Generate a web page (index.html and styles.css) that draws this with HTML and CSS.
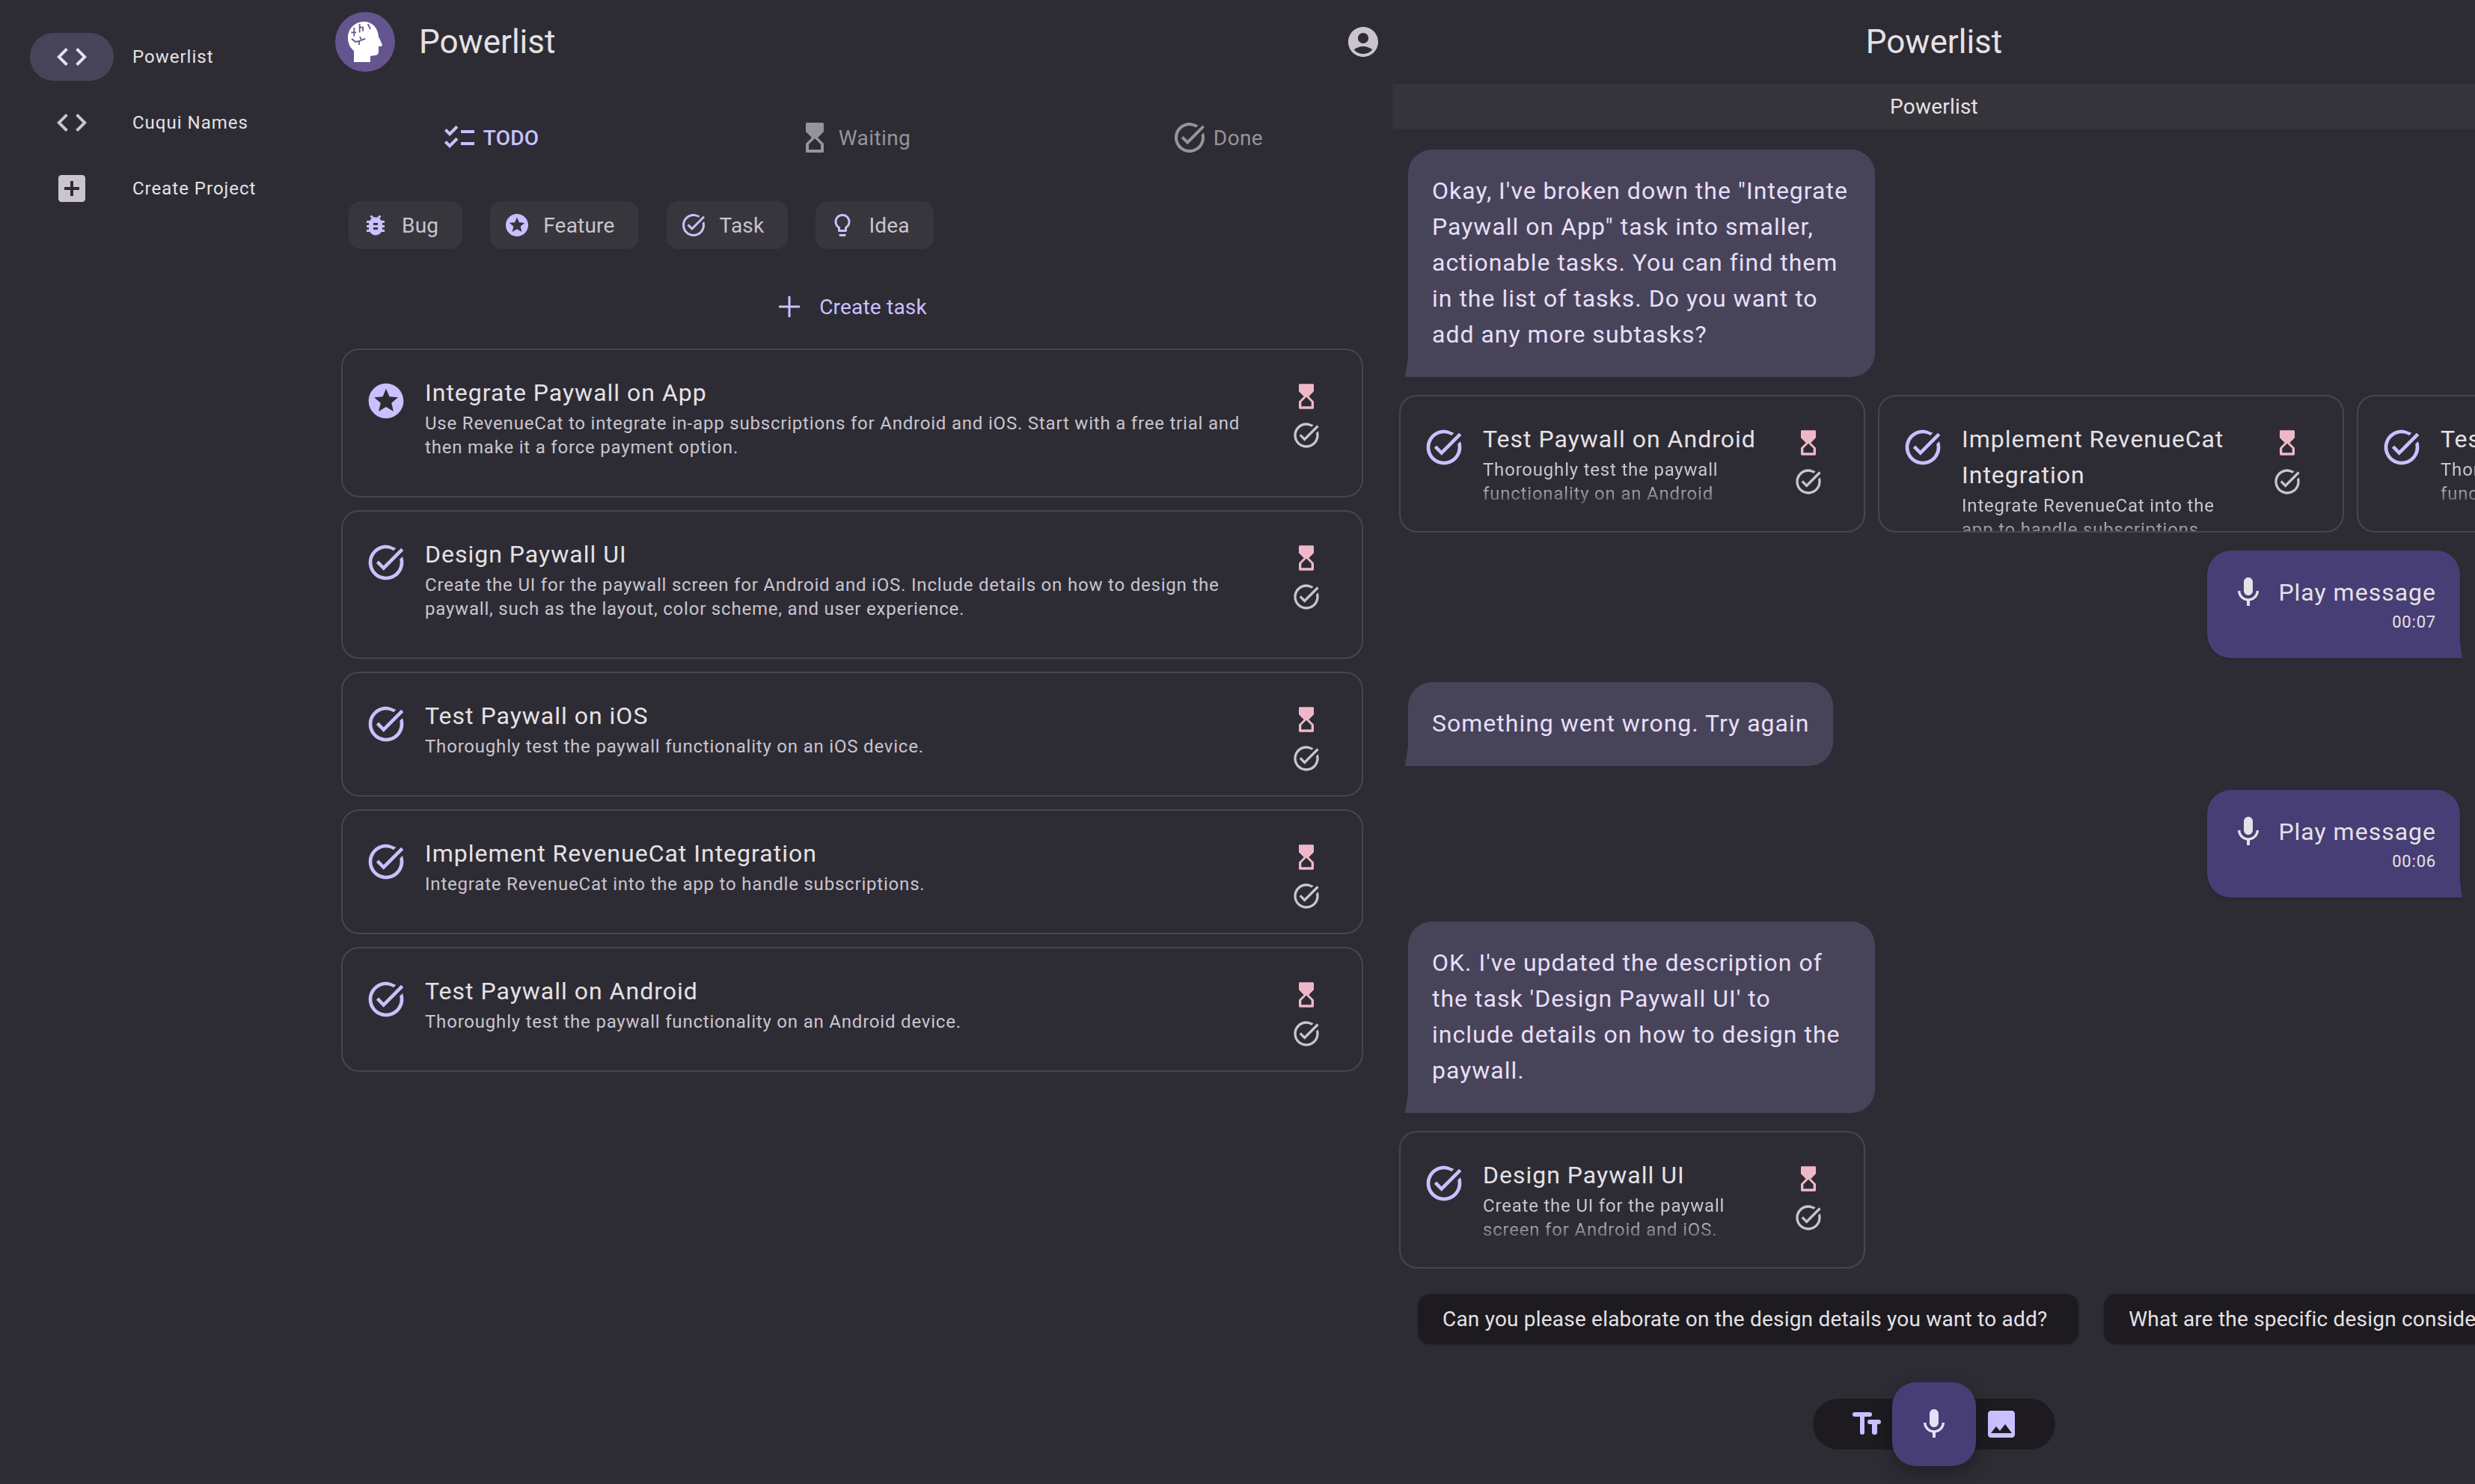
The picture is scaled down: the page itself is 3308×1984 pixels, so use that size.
FILE: index.html
```html
<!DOCTYPE html>
<html lang="en">
<head>
<meta charset="utf-8">
<title>Powerlist</title>
<link rel="stylesheet" href="styles.css">
</head>
<body>
<svg class="sprite" aria-hidden="true">
  <symbol id="i-code" viewBox="0 0 24 24"><path d="M9.4 16.6L4.8 12l4.6-4.6L8 6l-6 6 6 6 1.4-1.4zm5.2 0l4.6-4.6-4.6-4.6L16 6l6 6-6 6-1.4-1.4z"/></symbol>
  <symbol id="i-addbox" viewBox="0 0 24 24"><path d="M19 3H5c-1.11 0-2 .9-2 2v14c0 1.1.89 2 2 2h14c1.1 0 2-.9 2-2V5c0-1.1-.9-2-2-2zm-2 10h-4v4h-2v-4H7v-2h4V7h2v4h4v2z"/></symbol>
  <symbol id="i-account" viewBox="0 0 24 24"><path d="M12 2C6.48 2 2 6.48 2 12s4.48 10 10 10 10-4.48 10-10S17.52 2 12 2zm0 4c1.93 0 3.5 1.57 3.5 3.5S13.93 13 12 13s-3.5-1.57-3.5-3.5S10.07 6 12 6zm0 14c-2.03 0-4.43-.82-6.14-2.88C7.55 15.8 9.68 15 12 15s4.45.8 6.14 2.12C16.43 19.18 14.03 20 12 20z"/></symbol>
  <symbol id="i-checklist" viewBox="0 0 24 24"><path d="M22 7h-9v2h9V7zm0 8h-9v2h9v-2zM5.54 11 2 7.46l1.41-1.41 2.12 2.12 4.24-4.24 1.41 1.41L5.54 11zm0 8L2 15.46l1.41-1.41 2.12 2.12 4.24-4.24 1.41 1.41L5.54 19z"/></symbol>
  <symbol id="i-hourglass" viewBox="0 0 24 24"><path d="M6.8 2h10.4c.44 0 .8.36.8.8V8l-4 4 4 4v5.2c0 .44-.36.8-.8.8H6.8c-.44 0-.8-.36-.8-.8V16l4-4-4-4V2.8c0-.44.36-.8.8-.8zM16 16.5l-4-4-4 4V20h8v-3.5z"/></symbol>
  <symbol id="i-taskalt" viewBox="0 0 24 24"><path d="M22,5.18L10.59,16.6l-4.24-4.24l1.41-1.41l2.83,2.83l10-10L22,5.18z M19.79,10.22C19.92,10.79,20,11.39,20,12c0,4.42-3.58,8-8,8s-8-3.58-8-8c0-4.42,3.58-8,8-8c1.58,0,3.04,0.46,4.28,1.22l1.44-1.44C15.1,2.67,13.62,2,12,2C6.48,2,2,6.48,2,12c0,5.52,4.48,10,10,10s10-4.48,10-10c0-1.19-0.22-2.33-0.6-3.39L19.79,10.22z"/></symbol>
  <symbol id="i-stars" viewBox="0 0 24 24"><path d="M11.99 2C6.47 2 2 6.48 2 12s4.47 10 9.99 10C17.52 22 22 17.52 22 12S17.52 2 11.99 2zm4.24 16L12 15.45 7.77 18l1.12-4.81-3.73-3.23 4.92-.42L12 5l1.92 4.53 4.92.42-3.73 3.23L16.23 18z"/></symbol>
  <symbol id="i-bug" viewBox="0 0 24 24"><path d="M20 8h-2.81c-.45-.78-1.07-1.45-1.82-1.96L17 4.41 15.59 3l-2.17 2.17C12.96 5.06 12.49 5 12 5c-.49 0-.96.06-1.41.17L8.41 3 7 4.41l1.62 1.63C7.88 6.55 7.26 7.22 6.81 8H4v2h2.09c-.05.33-.09.66-.09 1v1H4v2h2v1c0 .34.04.67.09 1H4v2h2.81c1.04 1.79 2.97 3 5.19 3s4.15-1.21 5.19-3H20v-2h-2.09c.05-.33.09-.66.09-1v-1h2v-2h-2v-1c0-.34-.04-.67-.09-1H20V8zm-6 8h-4v-2h4v2zm0-4h-4v-2h4v2z"/></symbol>
  <symbol id="i-bulb" viewBox="0 0 24 24"><path d="M9 21c0 .55.45 1 1 1h4c.55 0 1-.45 1-1v-1H9v1zm3-19C8.14 2 5 5.14 5 9c0 2.38 1.19 4.47 3 5.74V17c0 .55.45 1 1 1h6c.55 0 1-.45 1-1v-2.26c1.81-1.27 3-3.36 3-5.74 0-3.86-3.14-7-7-7zm2.85 11.1l-.85.6V16h-4v-2.3l-.85-.6C7.8 12.16 7 10.63 7 9c0-2.76 2.24-5 5-5s5 2.24 5 5c0 1.63-.8 3.16-2.15 4.1z"/></symbol>
  <symbol id="i-add" viewBox="0 0 24 24"><path d="M19 12.75h-6.25V19h-1.5v-6.25H5v-1.5h6.25V5h1.5v6.25H19z"/></symbol>
  <symbol id="i-mic" viewBox="0 0 24 24"><path d="M12 14c1.66 0 2.99-1.34 2.99-3L15 5c0-1.66-1.34-3-3-3S9 3.34 9 5v6c0 1.66 1.34 3 3 3zm5.3-3c0 3-2.54 5.1-5.3 5.1S6.7 14 6.7 11H5c0 3.41 2.72 6.23 6 6.72V21h2v-3.28c3.28-.48 6-3.3 6-6.72h-1.7z"/></symbol>
  <symbol id="i-image" viewBox="0 0 24 24"><path d="M21 19V5c0-1.1-.9-2-2-2H5c-1.1 0-2 .9-2 2v14c0 1.1.9 2 2 2h14c1.1 0 2-.9 2-2zM8.5 13.5l2.5 3.01L14.5 12l4.5 6H5l3.5-4.5z"/></symbol>
  <symbol id="i-text" viewBox="0 0 48 48"><rect x="5" y="8" width="26" height="6" rx="3"/><rect x="15" y="8" width="6" height="30" rx="3"/><rect x="25" y="18" width="18" height="6" rx="3"/><rect x="31" y="18" width="7" height="20" rx="3"/></symbol>
</svg>

<nav class="rail">
  <a class="rail-item">
    <span class="rail-ind rail-ind-on"><svg class="ic48 c-soft"><use href="#i-code"/></svg></span>
    <span class="rail-label">Powerlist</span>
  </a>
  <a class="rail-item">
    <span class="rail-ind"><svg class="ic48 c-var"><use href="#i-code"/></svg></span>
    <span class="rail-label">Cuqui Names</span>
  </a>
  <a class="rail-item">
    <span class="rail-ind"><svg class="ic48 c-var"><use href="#i-addbox"/></svg></span>
    <span class="rail-label">Create Project</span>
  </a>
</nav>

<main class="main">
  <header class="main-head">
    <svg class="logo" viewBox="0 0 80 80">
      <circle cx="40" cy="40" r="40" fill="#65558f"/>
      <path fill="#fff" d="M25 67V52C19 47 17 41 17 34 17 22 27 13 38 13c12 0 19 8 20 20l5 11q0 2-4 2h-1v7q0 5-5 5l-6 1v8z"/>
      <path fill="none" stroke="#65558f" stroke-width="1.8" d="M25.3 21v11.5M21.3 27.3H28M32.7 16v11.5M32.7 20.7H37v5M22 35.7l5 4.3 5-1 8.3-3.3M32 39v5M35 37.5L33 33M43.7 16l3.3 7"/>
    </svg>
    <h1 class="title">Powerlist</h1>
    <svg class="ic48 c-var avatar"><use href="#i-account"/></svg>
  </header>

  <section class="main-body">
    <div class="tabs">
      <div class="tab tab-on"><svg class="ic48"><use href="#i-checklist"/></svg><span>TODO</span></div>
      <div class="tab"><svg class="ic48"><use href="#i-hourglass"/></svg><span>Waiting</span></div>
      <div class="tab"><svg class="ic48"><use href="#i-taskalt"/></svg><span>Done</span></div>
    </div>

    <div class="chips">
      <div class="chip"><svg class="ic36"><use href="#i-bug"/></svg><span>Bug</span></div>
      <div class="chip"><svg class="ic36"><use href="#i-stars"/></svg><span>Feature</span></div>
      <div class="chip"><svg class="ic36"><use href="#i-taskalt"/></svg><span>Task</span></div>
      <div class="chip"><svg class="ic36"><use href="#i-bulb"/></svg><span>Idea</span></div>
    </div>

    <div class="create"><svg class="ic48"><use href="#i-add"/></svg><span>Create task</span></div>

    <div class="task-list">
      <article class="task">
        <svg class="ic56"><use href="#i-stars"/></svg>
        <div class="task-text">
          <h2 class="task-title">Integrate Paywall on App</h2>
          <p class="task-desc">Use RevenueCat to integrate in-app subscriptions for Android and iOS. Start with a free trial and then make it a force payment option.</p>
        </div>
        <div class="task-acts"><svg class="ic40 c-pink"><use href="#i-hourglass"/></svg><svg class="ic40 c-var"><use href="#i-taskalt"/></svg></div>
      </article>
      <article class="task">
        <svg class="ic56"><use href="#i-taskalt"/></svg>
        <div class="task-text">
          <h2 class="task-title">Design Paywall UI</h2>
          <p class="task-desc">Create the UI for the paywall screen for Android and iOS. Include details on how to design the paywall, such as the layout, color scheme, and user experience.</p>
        </div>
        <div class="task-acts"><svg class="ic40 c-pink"><use href="#i-hourglass"/></svg><svg class="ic40 c-var"><use href="#i-taskalt"/></svg></div>
      </article>
      <article class="task">
        <svg class="ic56"><use href="#i-taskalt"/></svg>
        <div class="task-text">
          <h2 class="task-title">Test Paywall on iOS</h2>
          <p class="task-desc">Thoroughly test the paywall functionality on an iOS device.</p>
        </div>
        <div class="task-acts"><svg class="ic40 c-pink"><use href="#i-hourglass"/></svg><svg class="ic40 c-var"><use href="#i-taskalt"/></svg></div>
      </article>
      <article class="task">
        <svg class="ic56"><use href="#i-taskalt"/></svg>
        <div class="task-text">
          <h2 class="task-title">Implement RevenueCat Integration</h2>
          <p class="task-desc">Integrate RevenueCat into the app to handle subscriptions.</p>
        </div>
        <div class="task-acts"><svg class="ic40 c-pink"><use href="#i-hourglass"/></svg><svg class="ic40 c-var"><use href="#i-taskalt"/></svg></div>
      </article>
      <article class="task">
        <svg class="ic56"><use href="#i-taskalt"/></svg>
        <div class="task-text">
          <h2 class="task-title">Test Paywall on Android</h2>
          <p class="task-desc">Thoroughly test the paywall functionality on an Android device.</p>
        </div>
        <div class="task-acts"><svg class="ic40 c-pink"><use href="#i-hourglass"/></svg><svg class="ic40 c-var"><use href="#i-taskalt"/></svg></div>
      </article>
    </div>
  </section>
</main>

<aside class="chat">
  <header class="chat-head"><h1 class="title">Powerlist</h1></header>
  <div class="banner">Powerlist</div>

  <div class="thread">
    <div class="bubble bot m-28">Okay, I've broken down the "Integrate Paywall on App" task into smaller, actionable tasks. You can find them in the list of tasks. Do you want to add any more subtasks?</div>

    <div class="carousel m-24">
      <article class="task card-mini">
        <svg class="ic56"><use href="#i-taskalt"/></svg>
        <div class="task-text">
          <h2 class="task-title">Test Paywall on Android</h2>
          <p class="task-desc fade">Thoroughly test the paywall functionality on an Android device.</p>
        </div>
        <div class="task-acts"><svg class="ic40 c-pink"><use href="#i-hourglass"/></svg><svg class="ic40 c-var"><use href="#i-taskalt"/></svg></div>
      </article>
      <article class="task card-mini">
        <svg class="ic56"><use href="#i-taskalt"/></svg>
        <div class="task-text">
          <h2 class="task-title">Implement RevenueCat Integration</h2>
          <p class="task-desc fade">Integrate RevenueCat into the app to handle subscriptions.</p>
        </div>
        <div class="task-acts"><svg class="ic40 c-pink"><use href="#i-hourglass"/></svg><svg class="ic40 c-var"><use href="#i-taskalt"/></svg></div>
      </article>
      <article class="task card-mini">
        <svg class="ic56"><use href="#i-taskalt"/></svg>
        <div class="task-text">
          <h2 class="task-title">Test Paywall on iOS</h2>
          <p class="task-desc fade">Thoroughly test the paywall functionality on an iOS device.</p>
        </div>
        <div class="task-acts"><svg class="ic40 c-pink"><use href="#i-hourglass"/></svg><svg class="ic40 c-var"><use href="#i-taskalt"/></svg></div>
      </article>
    </div>

    <div class="bubble user m-24">
      <div class="play"><svg class="ic48"><use href="#i-mic"/></svg><span>Play message</span></div>
      <div class="time">00:07</div>
    </div>

    <div class="bubble bot bubble-short m-32">Something went wrong. Try again</div>

    <div class="bubble user m-32">
      <div class="play"><svg class="ic48"><use href="#i-mic"/></svg><span>Play message</span></div>
      <div class="time">00:06</div>
    </div>

    <div class="bubble bot m-32">OK. I've updated the description of the task 'Design Paywall UI' to include details on how to design the paywall.</div>

    <div class="carousel m-24">
      <article class="task card-mini">
        <svg class="ic56"><use href="#i-taskalt"/></svg>
        <div class="task-text">
          <h2 class="task-title">Design Paywall UI</h2>
          <p class="task-desc fade">Create the UI for the paywall screen for Android and iOS. Include details on how to design the paywall.</p>
        </div>
        <div class="task-acts"><svg class="ic40 c-pink"><use href="#i-hourglass"/></svg><svg class="ic40 c-var"><use href="#i-taskalt"/></svg></div>
      </article>
    </div>

    <div class="suggests">
      <div class="suggest">Can you please elaborate on the design details you want to add?</div>
      <div class="suggest">What are the specific design considerations you want to include?</div>
    </div>

    <div class="composer">
      <svg class="ic48 c-primary"><use href="#i-text"/></svg>
      <svg class="ic48 c-primary"><use href="#i-image"/></svg>
      <button class="mic-btn" type="button"><svg class="ic48"><use href="#i-mic"/></svg></button>
    </div>
  </div>
</aside>
</body>
</html>
```

FILE: styles.css
```css
* { box-sizing: border-box; }
html, body { margin: 0; padding: 0; }
body {
  width: 3308px;
  height: 1984px;
  overflow: hidden;
  display: flex;
  background: #2d2c34;
  color: #e6e1e5;
  font-family: Roboto, "Liberation Sans", sans-serif;
}
h1, h2, p { margin: 0; font-weight: 400; }
svg { display: block; flex: none; fill: currentColor; }
.sprite { position: absolute; width: 0; height: 0; }
.ic36 { width: 36px; height: 36px; }
.ic40 { width: 40px; height: 40px; }
.ic48 { width: 48px; height: 48px; }
.ic56 { width: 56px; height: 56px; color: #cbc0ff; margin-top: 7px; }
.c-var { color: #cac4d0; }
.c-soft { color: #e8def8; }
.c-pink { color: #efb8c8; }
.c-primary { color: #cbc0ff; }

/* rail */
.rail { width: 440px; flex: none; padding-top: 32px; }
.rail-item { display: flex; align-items: center; height: 88px; padding-left: 40px; }
.rail-ind { width: 112px; height: 64px; border-radius: 32px; display: flex; align-items: center; justify-content: center; }
.rail-ind-on { background: #474459; }
.rail-label { margin-left: 25px; font-size: 24px; letter-spacing: 1px; line-height: 32px; color: #e6e1e5; }

/* main */
.main { width: 1420px; flex: none; }
.main-head { height: 112px; display: flex; align-items: center; padding: 0 14px 0 8px; }
.logo { width: 80px; height: 80px; }
.title { font-size: 44px; line-height: 56px; color: #e6e1e5; }
.main-head .title { margin-left: 32px; flex: 1; }
.main-body { padding: 0 38px 0 16px; }

.tabs { display: grid; grid-template-columns: repeat(3, 1fr); margin: 36px -48px 0 -44px; height: 72px; }
.tab { display: flex; align-items: center; justify-content: center; gap: 8px; font-size: 28px; letter-spacing: .4px; color: #96939c; }
.tab-on { color: #cbc0ff; font-weight: 500; letter-spacing: .2px; }

.chips { display: flex; gap: 37px; margin-top: 49px; padding-left: 10px; }
.chip { display: flex; align-items: center; height: 64px; border-radius: 16px; background: #38363d; padding: 0 32px 0 18px; font-size: 28px; letter-spacing: .2px; color: #cac4d0; }
.chip svg { color: #cbc0ff; }
.chip span { margin-left: 17px; }

.create { display: flex; align-items: center; justify-content: center; gap: 16px; height: 64px; margin-top: 45px; padding-right: 8px; color: #cbc0ff; font-size: 28px; letter-spacing: .2px; }

.task-list { display: flex; flex-direction: column; gap: 17px; margin-top: 24px; }
.task { display: flex; align-items: flex-start; border: 2px solid #49454f; border-radius: 24px; padding: 33px 0 49px 30px; }
.task-text { flex: 1; min-width: 0; margin: 0 29px 0 24px; }
.task-title { font-size: 32px; line-height: 48px; letter-spacing: 1px; color: #e6e1e5; margin-bottom: 1px; }
.task-desc { font-size: 24px; line-height: 32px; letter-spacing: .8px; color: #cac4d0; }
.task-acts { flex: none; width: 40px; margin: 9px 54px -40px 0; display: flex; flex-direction: column; gap: 12px; }

/* chat */
.chat { width: 1448px; flex: none; display: flex; flex-direction: column; border-left: 2px solid #2f2e36; }
.chat-head { height: 112px; display: flex; align-items: center; justify-content: center; }
.banner { height: 60px; background: #36343b; display: flex; align-items: center; justify-content: center; font-size: 28px; letter-spacing: .2px; color: #e6e1e5; }
.thread { display: flex; flex-direction: column; }

.bubble { position: relative; font-size: 32px; line-height: 48px; letter-spacing: 1px; }
.bot { align-self: flex-start; margin-left: 20px; width: 624px; padding: 31px 32px 33px; background: #47445a; color: #e8def8; border-radius: 32px 32px 32px 0; }
.bot::after { content: ""; position: absolute; left: -4px; bottom: 0; width: 5px; height: 34px; background: #47445a; clip-path: polygon(100% 0, 100% 100%, 0 100%); }
.bubble-short { width: auto; }
.user { align-self: flex-end; margin-right: 20px; padding: 32px 32px 32px 31px; background: #463e75; color: #e6e1e5; border-radius: 32px 32px 0 32px; box-shadow: 0 1px 3px rgba(0,0,0,.25); }
.user::after { content: ""; position: absolute; right: -3px; bottom: 0; width: 4px; height: 30px; background: #463e75; clip-path: polygon(0 0, 100% 100%, 0 100%); }
.play { display: flex; align-items: center; gap: 16px; }
.time { text-align: right; font-size: 22px; line-height: 32px; letter-spacing: .8px; }

.m-24 { margin-top: 24px; }
.m-28 { margin-top: 28px; }
.m-32 { margin-top: 32px; }

.carousel { display: flex; gap: 17px; padding-left: 8px; overflow: hidden; }
.card-mini { flex: none; width: 623px; height: 184px; overflow: hidden; padding-bottom: 0; }
.fade { height: 64px; overflow: hidden; -webkit-mask-image: linear-gradient(to bottom, #000 34px, rgba(0,0,0,.25) 64px); mask-image: linear-gradient(to bottom, #000 34px, rgba(0,0,0,.25) 64px); }

.suggests { display: flex; gap: 34px; margin: 34px 0 0 33px; }
.suggest { flex: none; height: 67px; display: flex; align-items: center; padding: 0 42px 0 33px; border-radius: 16px; background: #1d1b20; font-size: 28px; letter-spacing: .2px; color: #e6e1e5; box-shadow: 0 1px 3px rgba(0,0,0,.25); }

.composer { position: relative; align-self: center; width: 324px; height: 68px; margin-top: 73px; border-radius: 34px; background: #1d1b20; display: flex; align-items: center; justify-content: space-between; padding: 0 48px; }
.mic-btn { position: absolute; left: 106px; top: -22px; width: 112px; height: 112px; border: 0; padding: 0; border-radius: 32px; background: #463e74; color: #e8def8; display: flex; align-items: center; justify-content: center; box-shadow: 0 8px 24px rgba(0,0,0,.3); }
```
